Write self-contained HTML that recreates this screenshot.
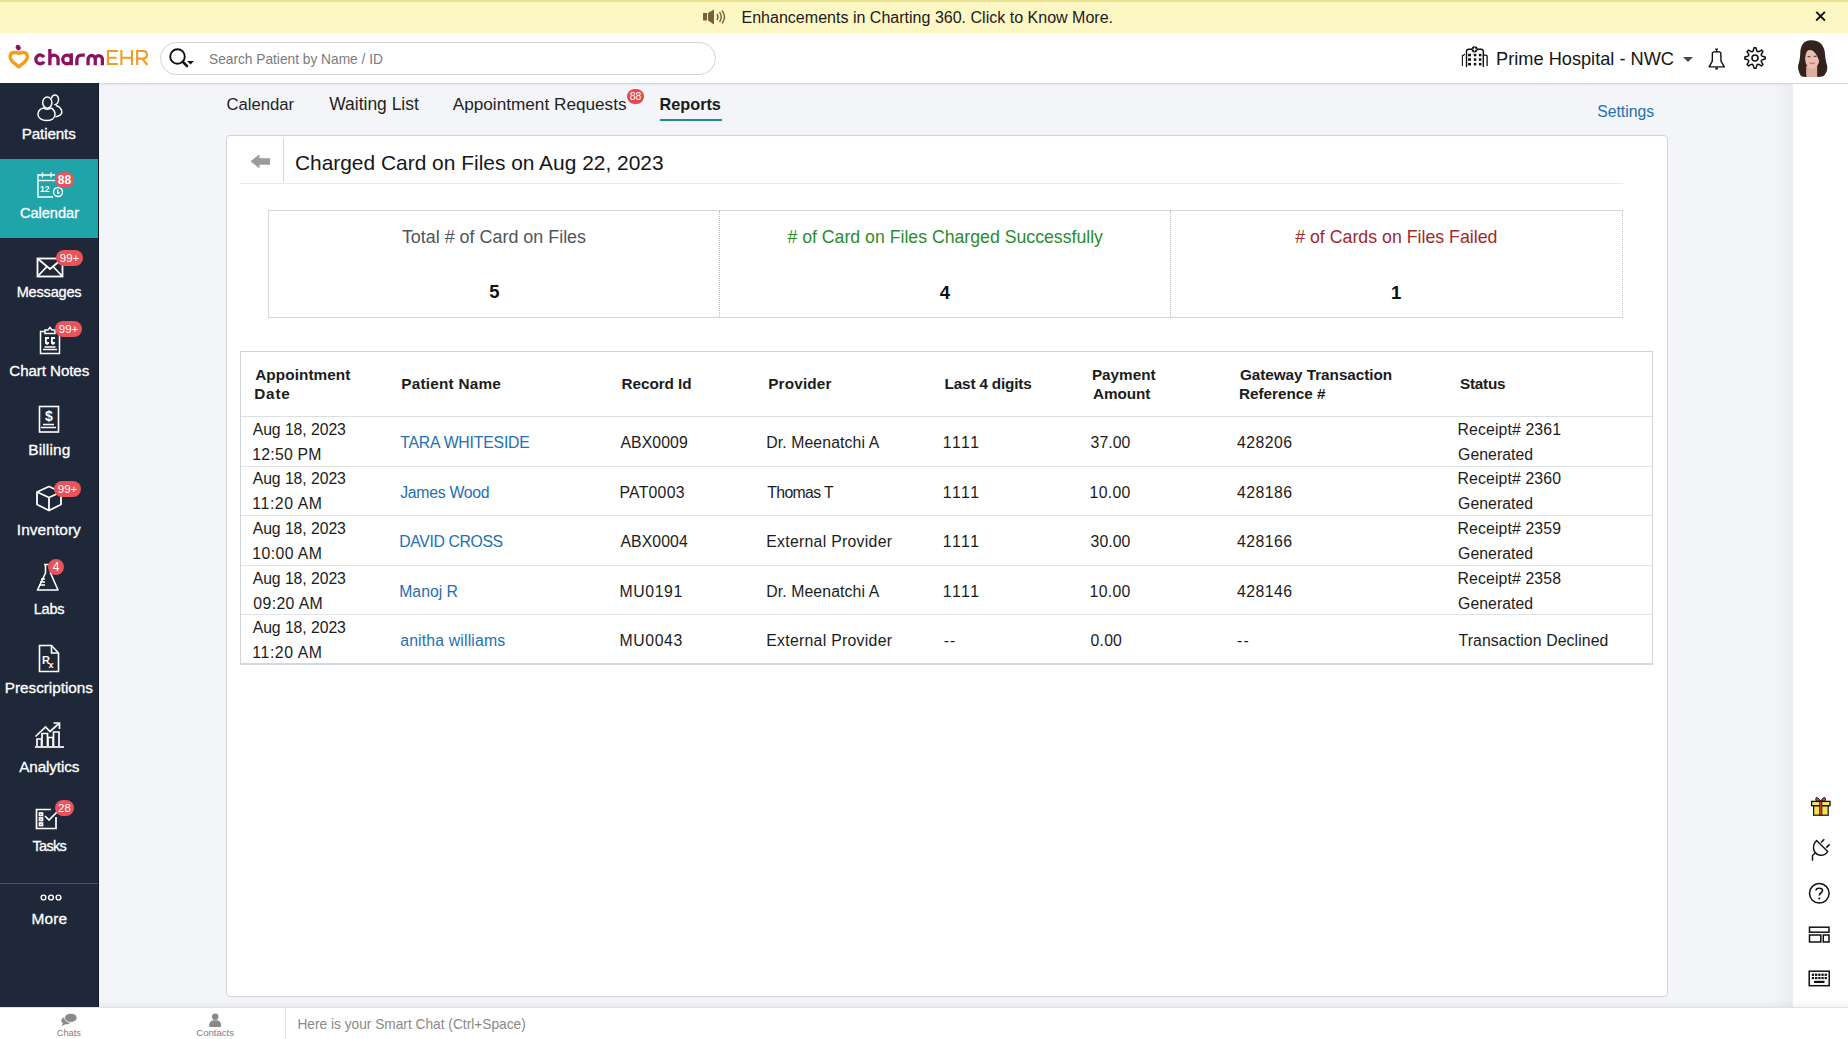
<!DOCTYPE html>
<html><head><meta charset="utf-8">
<style>
*{box-sizing:border-box;margin:0;padding:0}
html,body{width:1848px;height:1039px;overflow:hidden;font-family:"Liberation Sans",sans-serif;background:#F4F5F9;color:#1a1a1a}
.a{position:absolute}
.t{position:absolute;white-space:nowrap}
svg{position:absolute;overflow:visible}
.badge{position:absolute;background:#E9535A;color:#fff;font-size:11.5px;line-height:16px;height:16px;border-radius:8px;text-align:center;font-family:"Liberation Sans",sans-serif}
</style></head><body>
<!-- banner -->
<div class="a" style="left:0;top:0;width:1848px;height:33px;background:#FDF7C3"></div>
<div class="a" style="left:0;top:0;width:1848px;height:2px;background:#EBE18E"></div>
<!-- speaker icon -->
<svg style="left:703px;top:9px" width="24" height="16" viewBox="0 0 24 16">
  <rect x="0" y="4" width="4" height="7.5" fill="#7B6236"/>
  <path d="M5 4 L11 0.5 L11 15.5 L5 11.5 Z" fill="#7B6236"/>
  <path d="M14 5 Q16 8 14 11" stroke="#7B6236" stroke-width="1.4" fill="none"/>
  <path d="M16.5 3 Q20 8 16.5 13" stroke="#7B6236" stroke-width="1.4" fill="none"/>
  <path d="M19 1.5 Q24 8 19 14.5" stroke="#7B6236" stroke-width="1.4" fill="none"/>
</svg>
<!-- close X -->
<svg style="left:1814px;top:10px" width="13" height="13" viewBox="0 0 13 13">
  <path d="M2.2 1.8 L10.9 10.5 M10.9 1.8 L2.2 10.5" stroke="#111" stroke-width="1.8"/>
</svg>

<!-- header -->
<div class="a" style="left:0;top:33px;width:1848px;height:50px;background:#fff"></div>
<div class="a" style="left:0;top:83px;width:1848px;height:1px;background:#D8D9DC"></div>
<div class="a" style="left:99px;top:84px;width:1693px;height:3px;background:linear-gradient(to bottom,rgba(0,0,0,0.045),rgba(0,0,0,0))"></div>
<!-- logo -->
<svg style="left:7px;top:44px" width="24" height="26" viewBox="0 0 24 26">
  <ellipse cx="11.2" cy="3.6" rx="2.4" ry="2.8" transform="rotate(-25 11.2 3.6)" fill="#8B1560"/>
  <path d="M11.75 9.4 C10 8.4 7.6 8.3 5.6 8.7 C3.6 9.3 3.1 11.4 3.2 13.4 C3.4 15.6 5 17.3 7.2 19.2 L11.75 22.8 L16.3 19.2 C18.5 17.3 20.1 15.6 20.3 13.4 C20.4 11.4 19.9 9.3 17.9 8.7 C15.9 8.3 13.5 8.4 11.75 9.4 Z" fill="none" stroke="#F29F1E" stroke-width="3.5" stroke-linejoin="round"/>
</svg>
<svg style="left:0;top:0" width="160" height="83" viewBox="0 0 160 83">
  <g fill="none" stroke="#8C1162" stroke-width="3.3">
   <path d="M44 57.1 A4.4 4.4 0 1 0 44 61.6"/>
   <path d="M49.85 48.9 V65.2 M49.85 65.2 V59.2 A4.1 4.1 0 0 1 58.05 59.2 V65.2"/>
   <circle cx="67.1" cy="59.4" r="4.35"/>
   <path d="M71.3 53.3 V65.2"/>
   <path d="M76.85 65.2 V60.2 Q76.85 55.1 81.8 55.1 H84.8"/>
   <path d="M88.05 65.2 V59.1 A3.6 3.6 0 0 1 95.25 59.1 V65.2 M95.25 59.1 A3.55 3.55 0 0 1 102.35 59.1 V65.2"/>
  </g>
  <g fill="none" stroke="#EF9D24" stroke-width="2.1">
   <path d="M117.9 51 H107.9 V64 H117.9 M107.9 57.8 H116.5"/>
   <path d="M121.4 50 V65 M132 50 V65 M121.4 57.8 H132"/>
   <path d="M137.15 65 V51 H143 Q147 51 147 54.8 Q147 58.6 143 58.6 H137.15 M142.2 58.6 L147.4 65"/>
  </g>
</svg>
<!-- search -->
<div class="a" style="left:160px;top:42px;width:556px;height:33px;border:1px solid #D2D2D2;border-radius:17px;background:#fff"></div>
<svg style="left:168px;top:47px" width="28" height="22" viewBox="0 0 28 22">
  <circle cx="9.5" cy="9.5" r="7.3" stroke="#111" stroke-width="1.9" fill="none"/>
  <path d="M14.8 14.8 L19 19" stroke="#111" stroke-width="2.6" stroke-linecap="round"/>
  <path d="M19 14 L26 14 L22.5 17.5 Z" fill="#111"/>
</svg>
<!-- hospital icon -->
<svg style="left:1458px;top:42px" width="34" height="28" viewBox="0 0 34 28">
  <g stroke="#111" fill="none" stroke-linecap="round">
  <path d="M8.5 24.5 V9.5 Q8.5 7.3 10.7 7.3 H23.1 Q25.3 7.3 25.3 9.5 V24.5" stroke-width="1.4"/>
  <path d="M4.4 23.5 V13.6 Q5.8 13.4 6.5 12.2" stroke-width="1.1"/>
  <path d="M25.3 13.2 H28 Q29.1 13.2 29.1 14.3 V23.5" stroke-width="1.3"/>
  </g>
  <circle cx="16.6" cy="7.3" r="3.1" fill="#111"/>
  <path d="M16.6 5.4 V9.2 M14.7 7.3 H18.5" stroke="#fff" stroke-width="1.1"/>
  <g fill="#111">
   <rect x="10.1" y="11.8" width="2.9" height="2.5"/><rect x="15.8" y="11.8" width="2.5" height="2.5"/><rect x="20.9" y="11.8" width="2.5" height="2.5"/><rect x="10.1" y="16.3" width="2.9" height="2.5"/><rect x="15.8" y="16.3" width="2.5" height="2.5"/><rect x="20.9" y="16.3" width="2.5" height="2.5"/><rect x="10.1" y="20.9" width="2.9" height="2.5"/><rect x="15.8" y="20.9" width="2.5" height="2.5"/><rect x="20.9" y="20.9" width="2.5" height="2.5"/>
  </g>
</svg>
<!-- caret -->
<svg style="left:1683px;top:57px" width="10" height="5" viewBox="0 0 10 5"><path d="M0 0 H10 L5 5 Z" fill="#4a4a4a"/></svg>
<!-- bell -->
<svg style="left:1704px;top:44px" width="26" height="28" viewBox="0 0 26 28">
  <path d="M11.2 5.1 H14 M12.6 5.1 V7.6" stroke="#111" stroke-width="1.2"/>
  <path d="M8.4 8.6 Q9.2 7.7 12.6 7.6 Q16 7.7 16.8 8.6 L17 17.2 L20.3 22.9 H5.2 L8.3 17.2 Z" stroke="#111" stroke-width="1.4" fill="none" stroke-linejoin="round"/>
  <rect x="11.3" y="23.5" width="2.6" height="2" fill="#111"/>
</svg>
<!-- gear -->
<svg style="left:1744px;top:47px" width="22" height="22" viewBox="-11 -11 22 22">
  <path d="M-1.78 -7.29L-1.02 -10.15L1.02 -10.15L1.78 -7.29L2.60 -6.28L3.89 -6.41L6.46 -7.90L7.90 -6.46L6.41 -3.89L6.28 -2.60L7.29 -1.78L10.15 -1.02L10.15 1.02L7.29 1.78L6.28 2.60L6.41 3.89L7.90 6.46L6.46 7.90L3.89 6.41L2.60 6.28L1.78 7.29L1.02 10.15L-1.02 10.15L-1.78 7.29L-2.60 6.28L-3.89 6.41L-6.46 7.90L-7.90 6.46L-6.41 3.89L-6.28 2.60L-7.29 1.78L-10.15 1.02L-10.15 -1.02L-7.29 -1.78L-6.28 -2.60L-6.41 -3.89L-7.90 -6.46L-6.46 -7.90L-3.89 -6.41L-2.60 -6.28Z" fill="none" stroke="#111" stroke-width="1.5" stroke-linejoin="round"/>
  <circle cx="0" cy="0" r="3" stroke="#111" stroke-width="1.6" fill="none"/>
</svg>
<!-- avatar -->
<svg style="left:1790px;top:36px" width="46" height="46" viewBox="0 0 46 46">
  <path d="M21 4.2 C13.5 4.2 10.6 9.5 10.3 16.5 C10.1 21.5 9.6 25 8.4 28.8 C7.6 33.5 9.4 38.2 13.2 40.2 L17 40.8 L28.5 40.8 C33.5 39.6 37.6 36.4 37.2 31 C36.7 27 35.4 24 35.1 19 C34.8 10 30.5 4.2 21 4.2 Z" fill="#33221D"/>
  <path d="M16.2 30 H27.2 V41 H16.2 Z" fill="#DDAE9E"/>
  <ellipse cx="22.2" cy="22.4" rx="7.1" ry="10.5" fill="#E8BFB0"/>
  <path d="M14.8 16 C16 11 20 9 24 9.4 C29 10 31.2 16 30.4 28.5 C28.8 23 26.8 18 23.5 15.2 C20.8 13.2 17.4 13.6 14.8 16 Z" fill="#33221D"/>
  <path d="M8.6 28.2 C12.5 29.8 15.6 34 16.4 40.9 L11.8 40.6 C9.2 38.2 8 33.2 8.6 28.2 Z" fill="#33221D"/>
  <path d="M37 28.6 C32.6 30.2 29.6 34.8 28.4 40.9 L33.2 40.3 C36.2 38.4 37.6 33.8 37 28.6 Z" fill="#33221D"/>
  <path d="M17.6 20.6 H20.4 M23.8 20.4 H26.4" stroke="#6a4638" stroke-width="1.1"/>
  <path d="M19.6 26.6 Q22.2 28.8 24.8 26.6" stroke="#C27878" stroke-width="1.3" fill="none"/>
</svg>

<!-- main right shadow + right panel -->
<div class="a" style="left:1773px;top:84px;width:20px;height:923px;background:linear-gradient(to right,rgba(0,0,0,0),rgba(0,0,0,0.035))"></div>
<div class="a" style="left:1793px;top:84px;width:55px;height:923px;background:#fff"></div>
<!-- bottom bar -->
<div class="a" style="left:99px;top:999px;width:1749px;height:8px;background:linear-gradient(to bottom,rgba(0,0,0,0),rgba(0,0,0,0.04))"></div>
<div class="a" style="left:0;top:1007px;width:1848px;height:32px;background:#fff;border-top:1px solid #E1E1E3"></div>
<div class="a" style="left:285px;top:1008px;width:1px;height:31px;background:#E2E2E2"></div>
<!-- chats icon -->
<svg style="left:60px;top:1012px" width="18" height="15" viewBox="0 0 18 15">
  <ellipse cx="6.3" cy="8.6" rx="5" ry="3.8" fill="#8a8a8a"/>
  <path d="M2.8 11 L1.6 14.2 L5.6 12" fill="#8a8a8a"/>
  <ellipse cx="10.8" cy="5.8" rx="6.3" ry="4.6" fill="#8a8a8a" stroke="#fff" stroke-width="0.9"/>
</svg>
<!-- contacts icon -->
<svg style="left:208px;top:1013px" width="15" height="15" viewBox="0 0 15 15">
  <circle cx="7.2" cy="3.8" r="3.2" fill="#8a8a8a"/>
  <path d="M1.2 13 C1.2 8.5 3.5 7.3 7.2 7.3 C10.9 7.3 13.2 8.5 13.2 13 Q13.2 14 12 14 H2.4 Q1.2 14 1.2 13 Z" fill="#8a8a8a"/>
</svg>

<!-- right panel icons -->
<svg style="left:1810px;top:796px" width="21" height="21" viewBox="0 0 21 21">
  <path d="M10.6 5.2 C9 2.5 7.5 1.3 6.3 1.6 C5.6 2 5.6 4 6.3 5.2 Z M10.6 5.2 C12.2 2.5 13.7 1.3 14.9 1.6 C15.6 2 15.6 4 14.9 5.2 Z" fill="#C24A5A" stroke="#111" stroke-width="0.9"/>
  <rect x="3.6" y="9.6" width="14.6" height="9.6" fill="#F6DE55" stroke="#111" stroke-width="1.2"/>
  <rect x="1.6" y="5.4" width="18.4" height="4.3" fill="#F8E86A" stroke="#111" stroke-width="1.3"/>
  <rect x="9.6" y="5.4" width="2.4" height="13.8" fill="#C0392B" stroke="#111" stroke-width="0.6"/>
</svg>
<svg style="left:1800px;top:830px" width="40" height="40" viewBox="0 0 40 40">
  <path d="M16.6 10.6 L27.7 21.6 C25.5 24.5 22 25.6 19.3 25 C16.5 24.3 14.2 22 13.6 19 C13.2 16 14.5 12.6 16.6 10.6 Z" fill="none" stroke="#111" stroke-width="1.4" stroke-linejoin="round"/>
  <path d="M21 12.6 L24.3 9.2 M26.3 17.6 L29.6 14.4" stroke="#111" stroke-width="1.5"/>
  <path d="M15 23.2 L12.5 25.6 V30.7" stroke="#111" stroke-width="1.4" fill="none"/>
</svg>
<svg style="left:1808px;top:882px" width="23" height="23" viewBox="0 0 23 23">
  <circle cx="11.3" cy="11.3" r="9.8" stroke="#111" stroke-width="1.5" fill="none"/>
  <path d="M8 8.5 C8 5.5 14.5 5.5 14.5 8.5 C14.5 11 11.3 11 11.3 13.5" stroke="#111" stroke-width="1.6" fill="none"/>
  <circle cx="11.3" cy="16.5" r="1.1" fill="#111"/>
</svg>
<svg style="left:1808px;top:926px" width="23" height="18" viewBox="0 0 23 18">
  <rect x="1.5" y="1.2" width="19.5" height="5" stroke="#111" stroke-width="1.5" fill="none"/>
  <rect x="1.5" y="9" width="11.3" height="7" stroke="#111" stroke-width="1.5" fill="none"/>
  <rect x="15.3" y="9" width="5.7" height="7" stroke="#111" stroke-width="1.5" fill="none"/>
</svg>
<svg style="left:1808px;top:970px" width="23" height="17" viewBox="0 0 23 17">
  <rect x="1.2" y="1.2" width="20" height="14.5" stroke="#111" stroke-width="1.5" fill="none"/>
  <g fill="#111">
   <rect x="3.8" y="3.6" width="2.3" height="2.3"/><rect x="7" y="3.6" width="2.3" height="2.3"/><rect x="10.2" y="3.6" width="2.3" height="2.3"/><rect x="13.4" y="3.6" width="2.3" height="2.3"/><rect x="16.6" y="3.6" width="2.3" height="2.3"/>
   <rect x="3.8" y="7" width="2.3" height="2.1"/><rect x="7" y="7" width="2.3" height="2.1"/><rect x="10.2" y="7" width="2.3" height="2.1"/><rect x="13.4" y="7" width="2.3" height="2.1"/><rect x="16.6" y="7" width="2.3" height="2.1"/>
   <rect x="6" y="10.8" width="10.5" height="2.2"/>
  </g>
</svg>

<!-- sidebar -->
<div class="a" style="left:0;top:83px;width:99px;height:924px;background:#1F2838"></div>
<div class="a" style="left:0;top:159px;width:99px;height:79px;background:#1FA4AA"></div>
<div class="a" style="left:0;top:883px;width:99px;height:1px;background:#4C5668"></div>
<div class="a" style="left:98px;top:83px;width:1px;height:924px;background:#121822"></div>
<!-- patients icon -->
<svg style="left:37px;top:94px" width="26" height="28" viewBox="0 0 26 28">
  <g stroke="#fff" stroke-width="1.5" fill="none">
   <ellipse cx="10.3" cy="8.6" rx="4.6" ry="5.6"/>
   <path d="M14.4 4.6 C15 2 16.5 1 18 1 C20.5 1 21.7 3.5 21.5 6 C21.3 8.5 20 10.5 17.3 10.8"/>
   <path d="M6.5 14 C2.5 15 1 18 1 20.5 C1 24 5 26.5 9.5 26.5 C14 26.5 18 24.5 18 20.5 C18 17.5 16 15 14 14 C12.5 15.5 8 15.5 6.5 14 Z"/>
   <path d="M19 11.5 C23 13 24.8 15.5 24.8 18 C24.8 20.5 23 22 18.5 22.8"/>
  </g>
</svg>
<!-- calendar icon -->
<svg style="left:36px;top:172px" width="28" height="27" viewBox="0 0 28 27">
  <g stroke="#fff" stroke-width="1.4" fill="none">
   <path d="M19 3 H2 V25 H17"/>
   <path d="M2 8.5 H19"/>
   <path d="M6.5 0.5 V5.5 M15 0.5 V5.5"/>
   <circle cx="22" cy="20" r="4.5"/>
   <path d="M21.7 17.5 V21 H23.5"/>
  </g>
  <text x="4" y="19.5" font-size="8.5" font-weight="bold" fill="#fff" font-family="Liberation Sans">12</text>
</svg>
<div class="badge" style="left:55px;top:172px;width:19px;height:16px;font-size:12px;font-weight:bold">88</div>
<!-- messages icon -->
<svg style="left:36px;top:257px" width="28" height="21" viewBox="0 0 28 21">
  <g stroke="#fff" stroke-width="1.8" fill="none">
   <rect x="1.5" y="1.5" width="25" height="18"/>
   <path d="M1.5 1.5 L14 12 L26.5 1.5 M1.5 19.5 L10.5 10 M26.5 19.5 L17.5 10"/>
  </g>
</svg>
<div class="badge" style="left:56px;top:250px;width:27px;height:16px">99+</div>
<!-- chart notes icon -->
<svg style="left:39px;top:326px" width="22" height="29" viewBox="0 0 22 29">
  <g stroke="#fff" stroke-width="1.5" fill="none">
   <path d="M6 5.5 H1.5 V27.5 H20.5 V5.5 H16"/>
   <path d="M6 7.5 V4 H9 L11 1.5 L13 4 H16 V7.5 Z"/>
   <path d="M5.5 21 H16.5 M4 23.5 H18"/>
  </g>
  <g fill="#fff">
   <path d="M6 11 H10 V13 H7.8 V16 H10 V17.5 L8 19 L6 17.5 Z"/>
   <path d="M12 11 H16 V13 H13.8 V16 H16 V17.5 L14 19 L12 17.5 Z"/>
  </g>
</svg>
<div class="badge" style="left:55px;top:321px;width:27px;height:16px">99+</div>
<!-- billing icon -->
<svg style="left:38px;top:405px" width="22" height="28" viewBox="0 0 22 28">
  <g stroke="#fff" stroke-width="1.6" fill="none">
   <rect x="1.5" y="1.5" width="19" height="25.5"/>
   <path d="M5 19.5 H16 M3 22.5 H18"/>
  </g>
  <text x="11" y="16" text-anchor="middle" font-size="14" font-weight="bold" fill="#fff" font-family="Liberation Sans">$</text>
</svg>
<!-- inventory icon -->
<svg style="left:35px;top:485px" width="28" height="27" viewBox="0 0 28 27">
  <g stroke="#fff" stroke-width="1.8" fill="none" stroke-linejoin="round">
   <path d="M14 1.5 L26 7 V19.5 L14 25.5 L2 19.5 V7 Z"/>
   <path d="M2 7 L14 12.5 L26 7 M14 12.5 V25.5"/>
  </g>
</svg>
<div class="badge" style="left:54px;top:481px;width:27px;height:16px">99+</div>
<!-- labs icon -->
<svg style="left:36px;top:563px" width="24" height="29" viewBox="0 0 24 29">
  <g stroke="#fff" stroke-width="1.6" fill="none" stroke-linejoin="round">
   <path d="M8 1.5 H13 M9.5 1.5 V10 L1.5 27 H22 L14.5 10 V1.5"/>
   <path d="M5 16 H9 M4 19 H9 M3 22 H9"/>
  </g>
</svg>
<div class="badge" style="left:48px;top:559px;width:16px;height:16px;border-radius:8px;font-size:12px">4</div>
<!-- prescriptions icon -->
<svg style="left:38px;top:644px" width="22" height="29" viewBox="0 0 22 29">
  <g stroke="#fff" stroke-width="1.6" fill="none" stroke-linejoin="miter">
   <path d="M1.5 1.5 H13.5 L20.5 9 V27.5 H1.5 Z"/>
   <path d="M13.5 1.5 V9 H20.5"/>
  </g>
  <text x="4" y="19.5" font-size="11" fill="#fff" font-family="Liberation Sans" font-weight="bold">R</text>
  <text x="10.5" y="24" font-size="9" fill="#fff" font-family="Liberation Sans" font-weight="bold">x</text>
</svg>
<!-- analytics icon -->
<svg style="left:34px;top:722px" width="31" height="27" viewBox="0 0 31 27">
  <g stroke="#fff" stroke-width="1.7" fill="none">
   <path d="M1 25 H30"/>
   <path d="M3 24 V17 H7.5 V24 M8 24 V11.5 H13.5 V24 M14 24 V15.5 H19 V24 M19.5 24 V10 H25 V24"/>
   <path d="M1.5 14.5 L11.5 5 L16 9.5 L25 1.5"/>
   <path d="M19.5 1 H25.5 V7"/>
  </g>
</svg>
<!-- tasks icon -->
<svg style="left:35px;top:808px" width="26" height="22" viewBox="0 0 26 22">
  <g stroke="#fff" stroke-width="1.7" fill="none">
   <path d="M21 9 V20.5 H1.5 V1.5 H16"/>
   <path d="M10 8 L14 12 L23 3"/>
   <rect x="4.5" y="5" width="3" height="2.5"/><rect x="4.5" y="10" width="3" height="2.5"/><rect x="4.5" y="15" width="3" height="2.5"/>
  </g>
</svg>
<div class="badge" style="left:55px;top:800px;width:19px;height:16px;border-radius:8px">28</div>
<!-- more dots -->
<svg style="left:40px;top:894px" width="22" height="7" viewBox="0 0 22 7">
  <g stroke="#fff" stroke-width="1.4" fill="none"><circle cx="3.5" cy="3.5" r="2.4"/><circle cx="11" cy="3.5" r="2.4"/><circle cx="18.5" cy="3.5" r="2.4"/></g>
</svg>

<!-- tabs underline + badge -->
<div class="a" style="left:660px;top:119px;width:62px;height:2px;background:#1E8B90"></div>
<div class="badge" style="left:627px;top:89px;width:17px;height:15px;line-height:15px;border-radius:8px;font-size:10.5px;background:#E8474F">88</div>

<!-- card -->
<div class="a" style="left:226px;top:135px;width:1442px;height:862px;background:#fff;border:1px solid #D3D3D3;border-radius:4px"></div>
<svg style="left:250px;top:154px" width="21" height="15" viewBox="0 0 21 15">
  <path d="M0.5 7.3 L9.5 0.3 V4.3 H20 V10.7 H9.5 V14.5 Z" fill="#9b9b9b"/>
</svg>
<div class="a" style="left:283px;top:138px;width:1px;height:44px;background:#D6D6D6"></div>
<div class="a" style="left:240px;top:183px;width:1383px;height:1px;background:#E8E8E8"></div>
<!-- stats box -->
<div class="a" style="left:268px;top:210px;width:1355px;height:108px;border:1px solid #D6D6D6;border-right:1px dotted #BBBBBB"></div>
<div class="a" style="left:719px;top:211px;width:0;height:106px;border-left:1px dotted #BBBBBB"></div>
<div class="a" style="left:1170px;top:211px;width:0;height:106px;border-left:1px dotted #BBBBBB"></div>
<!-- table -->
<div class="a" style="left:240px;top:351px;width:1413px;height:314px;border:1px solid #CDD5DD;border-bottom:2px solid #D3D9DF"></div>
<div class="a" style="left:241px;top:416px;width:1411px;height:1px;background:#DADFE4"></div>
<div class="a" style="left:241px;top:466px;width:1411px;height:1px;background:#E0E3E7"></div>
<div class="a" style="left:241px;top:515px;width:1411px;height:1px;background:#E0E3E7"></div>
<div class="a" style="left:241px;top:565px;width:1411px;height:1px;background:#E0E3E7"></div>
<div class="a" style="left:241px;top:614px;width:1411px;height:1px;background:#E0E3E7"></div>

<div class="t" style="left:741.50px;top:8.00px;font-size:16.05px;line-height:19px;color:#1b1b1b;">Enhancements in Charting 360. Click to Know More.</div>
<div class="t" style="left:209.00px;top:52.00px;font-size:13.73px;line-height:16px;color:#7b7b7b;">Search Patient by Name / ID</div>
<div class="t" style="left:1496.10px;top:47.70px;font-size:18.21px;line-height:22px;color:#151515;">Prime Hospital - NWC</div>
<div class="t" style="left:226.50px;top:95.00px;font-size:16.70px;line-height:20px;color:#1f1f1f;letter-spacing:-0.02px;">Calendar</div>
<div class="t" style="left:329.30px;top:94.00px;font-size:17.45px;line-height:21px;color:#1f1f1f;">Waiting List</div>
<div class="t" style="left:452.70px;top:94.20px;font-size:17.19px;line-height:21px;color:#1f1f1f;">Appointment Requests</div>
<div class="t" style="left:659.50px;top:94.20px;font-size:16.26px;line-height:20px;color:#1a1a1a;font-weight:bold;">Reports</div>
<div class="t" style="left:1597.20px;top:101.80px;font-size:15.78px;line-height:19px;color:#2270B0;">Settings</div>
<div class="t" style="left:294.90px;top:149.90px;font-size:20.93px;line-height:25px;color:#161616;">Charged Card on Files on Aug 22, 2023</div>
<div class="t" style="left:401.90px;top:227.00px;font-size:17.91px;line-height:21px;color:#50545c;">Total # of Card on Files</div>
<div class="t" style="left:787.40px;top:226.80px;font-size:17.69px;line-height:21px;color:#2A8C2A;"># of Card on Files Charged Successfully</div>
<div class="t" style="left:1295.20px;top:226.80px;font-size:17.75px;line-height:21px;color:#A3282C;"># of Cards on Files Failed</div>
<div class="t" style="left:489.20px;top:281.40px;font-size:18.50px;line-height:22px;color:#111;font-weight:bold;">5</div>
<div class="t" style="left:939.80px;top:281.60px;font-size:18.50px;line-height:22px;color:#111;font-weight:bold;">4</div>
<div class="t" style="left:1391.00px;top:281.50px;font-size:18.50px;line-height:22px;color:#111;font-weight:bold;">1</div>
<div class="t" style="left:255.20px;top:366.00px;font-size:15.30px;line-height:18px;color:#1c1c1c;font-weight:bold;letter-spacing:0.09px;">Appointment</div>
<div class="t" style="left:254.20px;top:384.80px;font-size:15.30px;line-height:18px;color:#1c1c1c;font-weight:bold;letter-spacing:0.82px;">Date</div>
<div class="t" style="left:401.20px;top:375.10px;font-size:15.30px;line-height:18px;color:#1c1c1c;font-weight:bold;letter-spacing:0.25px;">Patient Name</div>
<div class="t" style="left:621.50px;top:375.10px;font-size:15.30px;line-height:18px;color:#1c1c1c;font-weight:bold;letter-spacing:-0.05px;">Record Id</div>
<div class="t" style="left:768.20px;top:375.10px;font-size:15.30px;line-height:18px;color:#1c1c1c;font-weight:bold;letter-spacing:0.18px;">Provider</div>
<div class="t" style="left:944.60px;top:375.10px;font-size:15.30px;line-height:18px;color:#1c1c1c;font-weight:bold;letter-spacing:-0.17px;">Last 4 digits</div>
<div class="t" style="left:1091.90px;top:366.00px;font-size:15.30px;line-height:18px;color:#1c1c1c;font-weight:bold;">Payment</div>
<div class="t" style="left:1092.90px;top:384.80px;font-size:15.30px;line-height:18px;color:#1c1c1c;font-weight:bold;letter-spacing:-0.06px;">Amount</div>
<div class="t" style="left:1239.90px;top:366.00px;font-size:15.30px;line-height:18px;color:#1c1c1c;font-weight:bold;letter-spacing:-0.04px;">Gateway Transaction</div>
<div class="t" style="left:1238.90px;top:384.80px;font-size:15.30px;line-height:18px;color:#1c1c1c;font-weight:bold;">Reference #</div>
<div class="t" style="left:1460.00px;top:375.10px;font-size:15.30px;line-height:18px;color:#1c1c1c;font-weight:bold;letter-spacing:-0.25px;">Status</div>
<div class="t" style="left:252.70px;top:419.90px;font-size:15.80px;line-height:19px;color:#1c1c1c;letter-spacing:-0.07px;">Aug 18, 2023</div>
<div class="t" style="left:252.30px;top:444.50px;font-size:15.80px;line-height:19px;color:#1c1c1c;letter-spacing:0.23px;">12:50 PM</div>
<div class="t" style="left:400.20px;top:433.10px;font-size:15.80px;line-height:19px;color:#2470B3;letter-spacing:-0.20px;">TARA WHITESIDE</div>
<div class="t" style="left:620.40px;top:433.10px;font-size:15.80px;line-height:19px;color:#1c1c1c;letter-spacing:0.11px;">ABX0009</div>
<div class="t" style="left:766.20px;top:433.10px;font-size:15.80px;line-height:19px;color:#1c1c1c;letter-spacing:0.11px;">Dr. Meenatchi A</div>
<div class="t" style="left:942.80px;top:433.10px;font-size:15.80px;line-height:19px;color:#1c1c1c;letter-spacing:1.50px;">1111</div>
<div class="t" style="left:1090.60px;top:433.10px;font-size:15.80px;line-height:19px;color:#1c1c1c;letter-spacing:0.06px;">37.00</div>
<div class="t" style="left:1237.10px;top:433.10px;font-size:15.80px;line-height:19px;color:#1c1c1c;letter-spacing:0.45px;">428206</div>
<div class="t" style="left:1457.50px;top:419.90px;font-size:15.80px;line-height:19px;color:#1c1c1c;letter-spacing:0.13px;">Receipt# 2361</div>
<div class="t" style="left:1458.10px;top:444.50px;font-size:15.80px;line-height:19px;color:#1c1c1c;letter-spacing:0.05px;">Generated</div>
<div class="t" style="left:252.70px;top:469.40px;font-size:15.80px;line-height:19px;color:#1c1c1c;letter-spacing:-0.07px;">Aug 18, 2023</div>
<div class="t" style="left:252.30px;top:494.00px;font-size:15.80px;line-height:19px;color:#1c1c1c;letter-spacing:0.59px;">11:20 AM</div>
<div class="t" style="left:400.20px;top:482.60px;font-size:15.80px;line-height:19px;color:#2470B3;letter-spacing:-0.28px;">James Wood</div>
<div class="t" style="left:619.40px;top:482.60px;font-size:15.80px;line-height:19px;color:#1c1c1c;letter-spacing:0.26px;">PAT0003</div>
<div class="t" style="left:767.20px;top:482.60px;font-size:15.80px;line-height:19px;color:#1c1c1c;letter-spacing:-0.62px;">Thomas T</div>
<div class="t" style="left:942.80px;top:482.60px;font-size:15.80px;line-height:19px;color:#1c1c1c;letter-spacing:1.50px;">1111</div>
<div class="t" style="left:1089.60px;top:482.60px;font-size:15.80px;line-height:19px;color:#1c1c1c;letter-spacing:0.31px;">10.00</div>
<div class="t" style="left:1237.10px;top:482.60px;font-size:15.80px;line-height:19px;color:#1c1c1c;letter-spacing:0.45px;">428186</div>
<div class="t" style="left:1457.50px;top:469.40px;font-size:15.80px;line-height:19px;color:#1c1c1c;letter-spacing:0.13px;">Receipt# 2360</div>
<div class="t" style="left:1458.10px;top:494.00px;font-size:15.80px;line-height:19px;color:#1c1c1c;letter-spacing:0.05px;">Generated</div>
<div class="t" style="left:252.70px;top:518.90px;font-size:15.80px;line-height:19px;color:#1c1c1c;letter-spacing:-0.07px;">Aug 18, 2023</div>
<div class="t" style="left:252.30px;top:543.50px;font-size:15.80px;line-height:19px;color:#1c1c1c;letter-spacing:0.42px;">10:00 AM</div>
<div class="t" style="left:399.20px;top:532.10px;font-size:15.80px;line-height:19px;color:#2470B3;letter-spacing:-0.37px;">DAVID CROSS</div>
<div class="t" style="left:620.40px;top:532.10px;font-size:15.80px;line-height:19px;color:#1c1c1c;letter-spacing:0.11px;">ABX0004</div>
<div class="t" style="left:766.20px;top:532.10px;font-size:15.80px;line-height:19px;color:#1c1c1c;letter-spacing:0.29px;">External Provider</div>
<div class="t" style="left:942.80px;top:532.10px;font-size:15.80px;line-height:19px;color:#1c1c1c;letter-spacing:1.50px;">1111</div>
<div class="t" style="left:1090.60px;top:532.10px;font-size:15.80px;line-height:19px;color:#1c1c1c;letter-spacing:0.06px;">30.00</div>
<div class="t" style="left:1237.10px;top:532.10px;font-size:15.80px;line-height:19px;color:#1c1c1c;letter-spacing:0.45px;">428166</div>
<div class="t" style="left:1457.50px;top:518.90px;font-size:15.80px;line-height:19px;color:#1c1c1c;letter-spacing:0.13px;">Receipt# 2359</div>
<div class="t" style="left:1458.10px;top:543.50px;font-size:15.80px;line-height:19px;color:#1c1c1c;letter-spacing:0.05px;">Generated</div>
<div class="t" style="left:252.70px;top:568.90px;font-size:15.80px;line-height:19px;color:#1c1c1c;letter-spacing:-0.07px;">Aug 18, 2023</div>
<div class="t" style="left:253.30px;top:593.50px;font-size:15.80px;line-height:19px;color:#1c1c1c;letter-spacing:0.39px;">09:20 AM</div>
<div class="t" style="left:399.20px;top:582.10px;font-size:15.80px;line-height:19px;color:#2470B3;">Manoj R</div>
<div class="t" style="left:619.40px;top:582.10px;font-size:15.80px;line-height:19px;color:#1c1c1c;letter-spacing:0.64px;">MU0191</div>
<div class="t" style="left:766.20px;top:582.10px;font-size:15.80px;line-height:19px;color:#1c1c1c;letter-spacing:0.11px;">Dr. Meenatchi A</div>
<div class="t" style="left:942.80px;top:582.10px;font-size:15.80px;line-height:19px;color:#1c1c1c;letter-spacing:1.50px;">1111</div>
<div class="t" style="left:1089.60px;top:582.10px;font-size:15.80px;line-height:19px;color:#1c1c1c;letter-spacing:0.31px;">10.00</div>
<div class="t" style="left:1237.10px;top:582.10px;font-size:15.80px;line-height:19px;color:#1c1c1c;letter-spacing:0.45px;">428146</div>
<div class="t" style="left:1457.50px;top:568.90px;font-size:15.80px;line-height:19px;color:#1c1c1c;letter-spacing:0.13px;">Receipt# 2358</div>
<div class="t" style="left:1458.10px;top:593.50px;font-size:15.80px;line-height:19px;color:#1c1c1c;letter-spacing:0.05px;">Generated</div>
<div class="t" style="left:252.70px;top:617.90px;font-size:15.80px;line-height:19px;color:#1c1c1c;letter-spacing:-0.07px;">Aug 18, 2023</div>
<div class="t" style="left:252.30px;top:642.50px;font-size:15.80px;line-height:19px;color:#1c1c1c;letter-spacing:0.59px;">11:20 AM</div>
<div class="t" style="left:400.20px;top:631.10px;font-size:15.80px;line-height:19px;color:#2470B3;letter-spacing:0.16px;">anitha williams</div>
<div class="t" style="left:619.40px;top:631.10px;font-size:15.80px;line-height:19px;color:#1c1c1c;letter-spacing:0.64px;">MU0043</div>
<div class="t" style="left:766.20px;top:631.10px;font-size:15.80px;line-height:19px;color:#1c1c1c;letter-spacing:0.29px;">External Provider</div>
<div class="t" style="left:943.80px;top:631.10px;font-size:15.80px;line-height:19px;color:#1c1c1c;letter-spacing:1.04px;">--</div>
<div class="t" style="left:1090.60px;top:631.10px;font-size:15.80px;line-height:19px;color:#1c1c1c;letter-spacing:0.18px;">0.00</div>
<div class="t" style="left:1237.10px;top:631.10px;font-size:15.80px;line-height:19px;color:#1c1c1c;letter-spacing:1.04px;">--</div>
<div class="t" style="left:1458.50px;top:631.10px;font-size:15.80px;line-height:19px;color:#1c1c1c;letter-spacing:0.11px;">Transaction Declined</div>
<div class="t" style="left:21.75px;top:125.00px;font-size:15.23px;line-height:18px;color:#ffffff;letter-spacing:-0.13px;-webkit-text-stroke:0.3px #fff;">Patients</div>
<div class="t" style="left:19.90px;top:204.10px;font-size:14.59px;line-height:18px;color:#ffffff;-webkit-text-stroke:0.3px #fff;">Calendar</div>
<div class="t" style="left:16.70px;top:284.20px;font-size:14.55px;line-height:17px;color:#ffffff;letter-spacing:-0.20px;-webkit-text-stroke:0.3px #fff;">Messages</div>
<div class="t" style="left:9.30px;top:362.30px;font-size:15.16px;line-height:18px;color:#ffffff;letter-spacing:-0.09px;-webkit-text-stroke:0.3px #fff;">Chart Notes</div>
<div class="t" style="left:28.30px;top:440.40px;font-size:15.45px;line-height:19px;color:#ffffff;letter-spacing:0.13px;-webkit-text-stroke:0.3px #fff;">Billing</div>
<div class="t" style="left:16.85px;top:519.50px;font-size:15.45px;line-height:19px;color:#ffffff;letter-spacing:0.06px;-webkit-text-stroke:0.3px #fff;">Inventory</div>
<div class="t" style="left:33.75px;top:600.60px;font-size:14.55px;line-height:17px;color:#ffffff;letter-spacing:-0.26px;-webkit-text-stroke:0.3px #fff;">Labs</div>
<div class="t" style="left:4.80px;top:678.70px;font-size:15.39px;line-height:18px;color:#ffffff;letter-spacing:-0.06px;-webkit-text-stroke:0.3px #fff;">Prescriptions</div>
<div class="t" style="left:19.20px;top:757.80px;font-size:15.27px;line-height:18px;color:#ffffff;letter-spacing:-0.11px;-webkit-text-stroke:0.3px #fff;">Analytics</div>
<div class="t" style="left:32.55px;top:837.90px;font-size:14.55px;line-height:17px;color:#ffffff;letter-spacing:-0.75px;-webkit-text-stroke:0.3px #fff;">Tasks</div>
<div class="t" style="left:31.40px;top:909.00px;font-size:15.45px;line-height:19px;color:#ffffff;letter-spacing:0.20px;-webkit-text-stroke:0.3px #fff;">More</div>
<div class="t" style="left:297.40px;top:1017.20px;font-size:13.73px;line-height:16px;color:#8a8a8a;">Here is your Smart Chat (Ctrl+Space)</div>
<div class="t" style="left:56.85px;top:1028.00px;font-size:9.21px;line-height:11px;color:#7d7d7d;letter-spacing:-0.03px;">Chats</div>
<div class="t" style="left:196.35px;top:1027.00px;font-size:9.54px;line-height:11px;color:#7d7d7d;">Contacts</div>

</body></html>
